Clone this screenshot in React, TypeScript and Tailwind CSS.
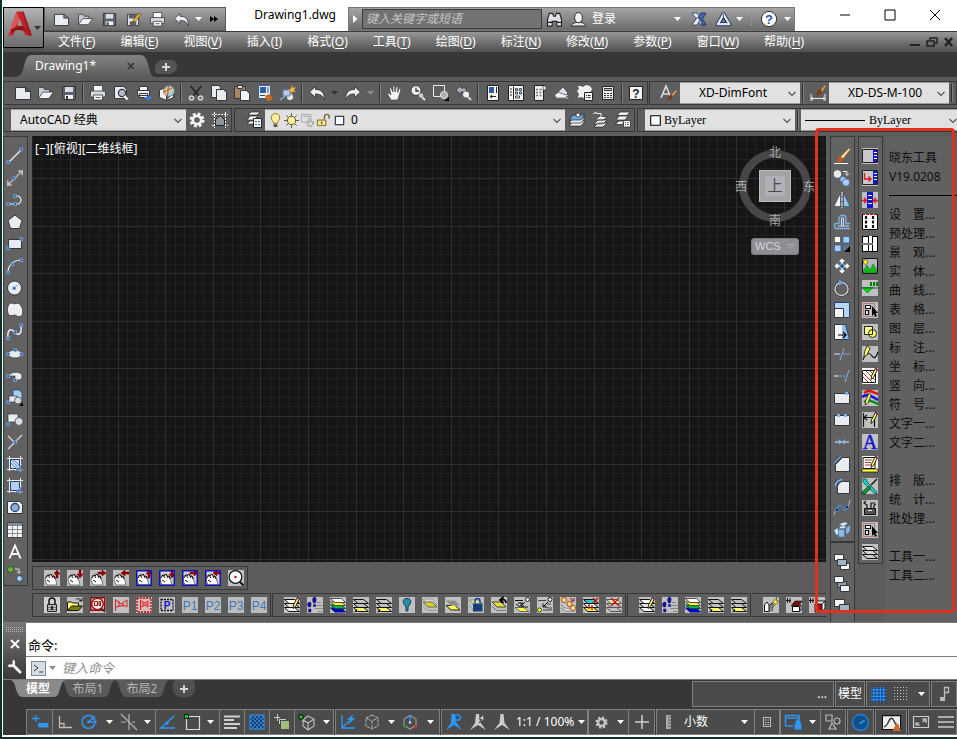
import type { ReactNode } from 'react';

const sans = "font-['Noto_Sans','Noto_Sans_CJK_SC',sans-serif]";

/* ---------- shared icon parts ---------- */

const Node = ({ x, y }: { x: number; y: number }) => (
  <rect x={x - 1} y={y - 1} width="2.4" height="2.4" fill="#253a5c" stroke="#76aaf0" strokeWidth="1" />
);

const Tile = ({ fill = '#c0c0c0' }: { fill?: string }) => <rect width="16" height="16" fill={fill} />;

const Sheets = ({ a = '#c0c0c0', b = '#c0c0c0', c = '#c0c0c0', stroke = '#111' }) => (
  <g stroke={stroke} strokeWidth="1" strokeLinejoin="round">
    <path d="M.5 10.500h10l5 4H5z" fill={c} />
    <path d="M.5 6.500h10l5 4H5z" fill={b} />
    <path d="M.5 2.500h10l5 4H5z" fill={a} />
  </g>
);

const Pencil = () => (
  <g>
    <path d="M13.500 0l2 1.500-4 8-2.500 2 .5-3.500z" fill="#ffff66" stroke="#111" strokeWidth=".9" />
    <path d="M13 1l2-1 1 2-1 1z" fill="#8b1a6b" />
  </g>
);

const Hand = () => (
  <g>
    <path d="M3 15l-2-5 1-4 3-2 3 1 3 2 1 4 1 4z" fill="#fff" stroke="#555" strokeWidth=".8" />
    <path d="M2 8l2-3 2 3M5 6l2-2 2 4M8 7l2-1 1 3M3 10l3 2" fill="none" stroke="#111" strokeWidth="1" />
  </g>
);

const arrows = {
  up: 'M12 8V4h-2l3-4 3 4h-2v4z',
  down: 'M12 0v4h-2l3 4 3-4h-2V0z',
  right: 'M8 2h4V0l4 3-4 3V4H8z',
  left: 'M16 2h-4V0L8 3l4 3V4h4z',
};

const pan = (dir: keyof typeof arrows, framed: boolean) => (
  <>
    <Tile fill={framed ? '#d4d0d8' : '#c0c0c0'} />
    <Hand />
    <path d={arrows[dir]} fill="#8b0000" stroke="#8b0000" strokeWidth=".6" />
    {framed && <rect x=".75" y=".75" width="14.5" height="14.5" fill="none" stroke="#1010b0" strokeWidth="1.5" />}
  </>
);

const pTile = (label: string) => (
  <>
    <Tile fill="#bcbcbc" />
    <text x="8" y="12.500" textAnchor="middle" fontSize="12" fontFamily="Liberation Sans, sans-serif" fill="#3f78bd">
      {label}
    </text>
  </>
);

const silver = '#e8ebf0';
const dark = '#33363b';
const sky = '#7fb2ee';

const iconMap: Record<string, ReactNode> = {
  /* file */
  new: <path d="M.5 2.500h10l5 4v8H.5z M10.500 2.500v4h5" fill={silver} stroke={dark} />,
  open: (
    <g stroke={dark} strokeWidth=".8">
      <path d="M.5 13.500V2.500h5l1 2h5v3" fill="#c6ccd6" />
      <path d="M.5 13.500L5 7h10.500l-4.500 6.500z" fill="#f0f2f5" />
    </g>
  ),
  save: (
    <g>
      <path d="M1.500 1.500h13v13h-13z" fill="#5b626e" stroke={dark} />
      <path d="M4 2h8v5H4z" fill="#d9dde5" />
      <path d="M4 10h8v4H4z" fill="#f1f3f6" />
      <path d="M5 11h2v3H5z" fill={dark} />
    </g>
  ),
  saveAs: (
    <g>
      <path d="M1.500 2.500h12v12h-12z" fill="#e4e7ec" stroke={dark} />
      <path d="M3 3h8v4H3z" fill="#5b626e" />
      <path d="M4 10h7v4H4z" fill="#5b626e" />
      <path d="M14 1l2 2-6 7-3 1 1-3z" fill="#f0b440" stroke="#5a3510" strokeWidth=".7" />
    </g>
  ),
  print: (
    <g stroke={dark} strokeWidth=".8">
      <path d="M3.500 .5h9v6h-9z" fill="#fff" />
      <path d="M.5 6h15v6H.5z" fill="#d6dae1" />
      <path d="M3.500 10h9v5h-9z" fill="#fff" />
      <path d="M5.500 12.500h5" />
    </g>
  ),
  preview: (
    <g>
      <path d="M1.500 1.500h9l3 3v9h-12z" fill={silver} stroke={dark} />
      <circle cx="9" cy="8" r="3.600" fill="#aebccc" stroke={dark} strokeWidth="1.200" />
      <path d="M11.500 11l3 3.500" stroke="#fff" strokeWidth="2.200" />
    </g>
  ),
  publish: (
    <g>
      <path d="M3.500 1.500h8v4h-8z M1.500 5.500h12v5h-12z M3.500 8.500h8v4h-8z" fill="#f0f2f5" stroke={dark} />
      <path d="M8 12h4v-2.500l4 3.500-4 3v-2H8z" fill="#3c78d8" />
    </g>
  ),
  globe: (
    <g>
      <path d="M.5 5l7-3v13.500l-7-3z M7.500 15.500l7-3V8" fill="#f3f4f6" stroke={dark} />
      <circle cx="10" cy="6" r="5.400" fill="#9fd4dc" stroke="#777" />
      <path d="M6 4c3-3 5 0 3 3s-3 1-3 3M12 3c2 1 2 4 0 5z" fill="#f0c860" />
      <path d="M9.500 1l-1 10M5 7l8-4" stroke="#d24a30" />
    </g>
  ),
  /* edit */
  cut: (
    <g fill="none" stroke="#22252a" strokeWidth="1.600">
      <path d="M2.500 1l8.500 10M13.500 1L5 11" />
      <circle cx="3.500" cy="13" r="2" stroke="#d3d6db" />
      <circle cx="12.500" cy="13" r="2" stroke="#d3d6db" />
    </g>
  ),
  copy: (
    <g fill={silver} stroke={dark}>
      <path d="M.5 .5h7l2 2v10h-9z" />
      <path d="M5.500 4.500h7l3 3v8h-10z" />
    </g>
  ),
  paste: (
    <g stroke={dark}>
      <path d="M.5 1.500h11v12H.5z" fill="#a9865d" />
      <path d="M3.500 .5h5v3h-5z" fill="#ddd" />
      <path d="M6.500 5.500h6l3 3v7h-9z" fill="#f1f3f6" />
    </g>
  ),
  match: (
    <g>
      <path d="M1.500 .5h12v13h-12z" fill="#eef1f5" stroke="#335e9e" />
      <path d="M3 2h6v6H3z" fill="#2d5fa8" />
      <path d="M11 2v6M3 10.500h5" stroke="#444" />
      <path d="M8 11l4-2 4 4-3 3h-3z" fill="#c96a1c" />
    </g>
  ),
  blockEdit: (
    <g>
      <circle cx="10" cy="12" r="3" fill={silver} />
      <path d="M3 5h7v6H3z" fill="#bfcbdc" stroke="#5781ba" />
      <path d="M0 15l5-4" stroke={sky} strokeWidth="1.500" />
      <path d="M12 0l1 3 3-1-2 3 2 2-3-.500L11 9l-.500-3L8 5l3-1.500z" fill="#f4b63c" />
    </g>
  ),
  undo: <path d="M.5 7l6-5.500v3c6 0 9 3 9 10.500-2-5-5-6-9-6v3.500z" fill="#eef0f3" stroke={dark} strokeWidth=".9" />,
  redo: <path d="M15.500 7L9.500 1.500v3C3.500 4.500.5 7.500.5 15c2-5 5-6 9-6v3.500z" fill="#eef0f3" stroke={dark} strokeWidth=".9" />,
  /* view */
  hand: (
    <path
      d="M4 15L.5 9 2 8l2 2-1.500-7 1.500-.5L6 7V.5h1.500L8 7 9.500 1l1.500.5-.5 6 2-4.500L14 4l-2 7-1.500 4z"
      fill="#f3f4f6"
      stroke={dark}
      strokeWidth=".6"
    />
  ),
  zoomRt: (
    <g>
      <circle cx="6" cy="5.500" r="5" fill="#edf0f4" stroke={dark} />
      <path d="M6 2.500V6h3" fill="none" stroke="#333" strokeWidth="1.300" />
      <circle cx="11" cy="10.500" r="2.200" fill="#c8ced8" />
      <path d="M12 12l3 3" stroke="#ddd" strokeWidth="2" />
    </g>
  ),
  zoomWin: (
    <g>
      <path d="M.5 .5h11v11H.5z" fill="none" stroke="#e8ebf0" />
      <circle cx="11" cy="10" r="3.600" fill="#aab1bc" stroke="#ddd" />
      <path d="M16 12v4h-5z" fill="#000" />
    </g>
  ),
  zoomPrev: (
    <g>
      <path d="M0 5l5-4.500v2.500h5v4H5v2.500z" fill="#a9b0ba" stroke={dark} strokeWidth=".8" />
      <circle cx="10" cy="9.500" r="3" fill="#eef0f3" />
      <path d="M12 12l3 3" stroke="#ddd" strokeWidth="2" />
    </g>
  ),
  props: (
    <g>
      <path d="M2.500 .5h11v15h-11z" fill="#f3f4f6" stroke="#222" />
      <path d="M4 2h5v6H4z" fill="#2c5da5" />
      <path d="M11.500 2v6M5 11.500h6M7 10l-2 1.500L7 13" stroke="#222" />
    </g>
  ),
  designCenter: (
    <g>
      <path d="M.5 .5h15v15H.5z" fill="#f3f4f6" stroke="#222" />
      <path d="M5.500 1.500v13M2 4h2M2 7h2M2 10h2" stroke="#222" />
      <path d="M7.500 3.500h2v2h-2zM11.500 3.500h2v2h-2zM7.500 7h2v2h-2zM11.500 7h2v2h-2zM7.500 11h4v2h-4z" fill="#fff" stroke="#345" />
    </g>
  ),
  palettes: (
    <g>
      <path d="M3.500 .5h9v15h-9z" fill="#eceef1" stroke="#222" />
      <path d="M12 1h3v4h-3z" fill="#eceef1" stroke="#222" strokeWidth=".6" />
      <path d="M5 4.500h2M8.500 4.500h2M5 7.500h2M8.500 7.500h2M5 10.500h2M8.500 10.500h2" stroke="#777" strokeWidth="1.500" />
    </g>
  ),
  sheetSet: (
    <g stroke={dark} strokeWidth=".7">
      <path d="M.5 12h14l1 2H2z" fill="#cfd4db" />
      <path d="M.5 10l5-4 9 4-3 3H2z" fill="#eef0f3" />
      <path d="M4 7l5-5 5 6-2 2z" fill="#dfe3e9" />
    </g>
  ),
  markup: (
    <g>
      <path d="M1 1l3 0 2 1 3-2 4 1 2 3-2 4H7v5l-3-1-3 1 1-4-2-3 2-2z" fill="#eef0f3" />
      <path d="M7.500 7.500h8v8h-8z" fill="#f3f4f6" stroke="#222" />
      <path d="M9 10.500h1M11 10.500h2.500M9 12.500h1M11 12.500h2.500" stroke="#222" />
    </g>
  ),
  calc: (
    <g>
      <path d="M2.500 1.500h11v13h-11z" fill="#eef0f3" stroke="#222" />
      <path d="M4.500 3.500h7v2h-7z" fill="#ccc" stroke="#333" />
      <path d="M4 8.500h8M4 10.500h8M4 12.500h8" stroke="#333" strokeDasharray="2 1" />
    </g>
  ),
  helpBox: (
    <g>
      <path d="M1.500 1.500h13v13h-13z" fill="#f3f4f6" stroke="#222" />
      <text x="8" y="12.500" textAnchor="middle" fontSize="12" fontWeight="700" fontFamily="Liberation Sans, sans-serif" fill="#222">?</text>
    </g>
  ),
  textStyle: (
    <g>
      <path d="M0 13L5 1l5 12M2 9h6" fill="none" stroke="#ddd" strokeWidth="1.600" />
      <path d="M15 5l1 1-5 6-2-1z" fill="#e0984a" />
      <path d="M10 9l2 2c0 3-3 5-6 4 2-1 1-4 4-6z" fill="#7a3e18" />
    </g>
  ),
  dimStyle: (
    <g>
      <path d="M1 9v7M15 9v7M1 13.500h14M3 12l-2 1.500L3 15M13 12l2 1.500L13 15" fill="none" stroke="#e8ebf0" />
      <path d="M15 0l1 1-4 6-2-1z" fill="#e0984a" />
      <path d="M10 4l2 2c0 3-3 5-7 4 2-1 2-5 5-6z" fill="#7a3e18" />
    </g>
  ),
  gear: (
    <g>
      <circle cx="8" cy="8" r="6" fill="none" stroke="#f0f2f5" strokeWidth="3" strokeDasharray="2.700 2" />
      <circle cx="8" cy="8" r="4.200" fill="none" stroke="#f0f2f5" strokeWidth="2.800" />
    </g>
  ),
  wsHouse: (
    <g fill="none">
      <path d="M0 2.500h16M0 13.500h16M2.500 0v16M13.500 0v16" stroke="#f4f4f4" strokeDasharray="2 1" />
      <path d="M3.500 13.500V7.500l4.500-4 4.500 4v6z" fill="#8f959d" stroke="#222" />
    </g>
  ),
  layerProps: (
    <g>
      <path d="M5 0h9l-3 3H2zM4 4h8l-4 4H1zM4 9h4v3H1z" fill="#f3f4f6" stroke="#222" strokeWidth=".7" />
      <path d="M7.500 6.500h8v9h-8z" fill="#f3f4f6" stroke="#222" />
      <path d="M9 9.500h2M12 9.500h2M9 12.500h2M12 12.500h2" stroke="#3a6db5" />
    </g>
  ),
  bulb: (
    <g>
      <path d="M8 .5A4.500 4.500 0 0112.500 5C12.500 8 10 8.500 10 11H6c0-2.500-2.500-3-2.500-6A4.500 4.500 0 018 .5z" fill="#fff0a0" stroke="#8d7419" />
      <path d="M6 12h4v3H6z" fill="#555" />
    </g>
  ),
  sun: (
    <g stroke="#5c5025">
      <path d="M8 0v16M0 8h16M2.500 2.500l11 11M13.500 2.500l-11 11" />
      <circle cx="8" cy="8" r="4.300" fill="#fff0a0" />
    </g>
  ),
  vpFreeze: (
    <g fill="none" stroke="#a5a5a5">
      <path d="M1.500 1.500h10v8h-10zM3.500 3.500h6v4" />
      <circle cx="11" cy="11" r="3" strokeWidth="2.400" strokeDasharray="1.700 1" />
    </g>
  ),
  unlock: (
    <g>
      <path d="M9 7V4a2.500 2.500 0 015 0v2" fill="none" stroke="#77672a" strokeWidth="1.500" />
      <path d="M1.500 7.500h9v6h-9z" fill="#f7e68c" stroke="#77672a" />
      <path d="M6 9v3" stroke="#333" />
    </g>
  ),
  swatch: <path d="M3.500 3.500h9v9h-9z" fill="#fff" stroke="#000" />,
  layerCur: (
    <g stroke="#222" strokeWidth=".7">
      <path d="M4 9h12l-4 5H0z" fill="#eef0f3" />
      <path d="M4 6h12l-4 5H0z" fill="#eef0f3" />
      <path d="M4 3h12l-4 5H0z" fill="#6fa4e0" />
      <circle cx="9" cy="3" r="2" fill="#fff" />
    </g>
  ),
  layerPrev: (
    <g stroke="#222" strokeWidth=".7">
      <path d="M6 11h9l-4 4H2zM6 8h9l-4 4H2zM7 4.500h8L11.500 8H3.500z" fill="#eef0f3" />
      <path d="M1 2l3-2v1.500h5V5" fill="none" stroke="#eef0f3" strokeWidth="1" />
    </g>
  ),
  layerState: (
    <g stroke="#222" strokeWidth=".7">
      <path d="M5 0h10l-3 3.500H2zM4 4h9l-3 4H1zM4 9h6l-3 3.500H0z" fill="#eef0f3" />
      <path d="M8.500 8.500h7v6.500h-7z" fill="#f3f4f6" />
      <path d="M10 10.500h1M12 10.500h2M10 12.500h1M12 12.500h2" stroke="#335" />
    </g>
  ),
  /* draw */
  line: (<><path d="M2 14L14 2" stroke="#eef0f3" strokeWidth="1.200" /><Node x={1} y={14} /><Node x={14} y={1} /></>),
  xline: (
    <>
      <path d="M3 13L13 3" stroke="#bcbcbc" strokeWidth="1.200" />
      <path d="M0 16v-6l5.500 5.500zM16 0v6L10.500.500z" fill="#bcbcbc" />
      <Node x={7} y={8} />
    </>
  ),
  pline: (<><path d="M2 12h8a4 4 0 000-8H8" fill="none" stroke="#eef0f3" strokeWidth="1.200" /><Node x={1} y={12} /><Node x={8} y={12} /><Node x={8} y={4} /></>),
  polygon: <path d="M8 1l7 5.500-2.500 8h-9L1 6.500z" fill={silver} stroke={dark} />,
  rect: (<><path d="M1.500 3.500h13v9h-13z" fill={silver} stroke={dark} /><Node x={1} y={12} /><Node x={14} y={3} /></>),
  arc: (<><path d="M1 14C1 7 7 2 14 2" fill="none" stroke="#eef0f3" strokeWidth="1.200" /><Node x={1} y={14} /><Node x={5} y={6} /><Node x={14} y={2} /></>),
  circle: (<><circle cx="7.500" cy="8" r="7" fill={silver} stroke={dark} /><path d="M8 8l4-4" stroke={sky} /><Node x={7} y={8} /></>),
  cloud: <path d="M2 2c2-1.500 4-1 5 0 3-1.500 6-1 7 2 2 2 2 8 1 9-2 3-5 1-7 0-3 1-7 1-7-2-1-2-1-5 1-9z" fill="#eceef2" stroke={dark} strokeWidth=".8" />,
  spline: (<><path d="M1 14C0 5 4 4 7.500 8S15 11 14 2" fill="none" stroke="#eef0f3" strokeWidth="1.500" /><Node x={1} y={14} /><Node x={8} y={8} /><Node x={14} y={1} /></>),
  ellipse: (<><ellipse cx="8" cy="8" rx="7" ry="4" fill={silver} stroke={dark} strokeWidth=".7" /><Node x={1} y={8} /><Node x={14} y={8} /><Node x={8} y={4} /></>),
  ellipseArc: (<><path d="M2 8c1-5 13-5 13 0s-4 4-7 4V8z" fill={silver} stroke={dark} strokeWidth=".7" /><Node x={1} y={8} /><Node x={8} y={12} /></>),
  insert: (
    <>
      <path d="M6 0h6l3 3v7H6z" fill="#a9cdf5" stroke="#2c4a75" strokeWidth=".8" />
      <path d="M2 6h8v6H2z" fill={silver} stroke={dark} strokeWidth=".7" />
      <circle cx="11" cy="10.500" r="3.500" fill="#d8dce3" stroke={dark} strokeWidth=".7" />
      <path d="M16 12v4h-4z" fill="#000" />
      <Node x={1} y={12} />
    </>
  ),
  block: (
    <>
      <path d="M1 2h10v8H1z" fill={silver} stroke={dark} strokeWidth=".7" />
      <circle cx="12" cy="9.500" r="4" fill="#d8dce3" stroke={dark} strokeWidth=".7" />
      <Node x={1} y={12} />
    </>
  ),
  point: (<><path d="M1 15L15 1M1 2l6 6" stroke="#d7dade" strokeWidth="1.200" /><Node x={8} y={8} /></>),
  hatch: (
    <>
      <path d="M2.500 0v15M13.500 0v9M0 2.500h16M0 13.500h10" stroke="#eef0f3" />
      <path d="M3.500 3.500h9v9h-9z" fill="#cfdcf0" stroke="#24456f" />
      <path d="M4 7l5 5M4 4l8 8M7 4l5 5" stroke="#5b8bcb" />
      <path d="M8 15L15 8M10 14h6M13 10v6" stroke={sky} />
    </>
  ),
  gradient: (
    <>
      <path d="M2.500 0v15M13.500 0v9M0 2.500h16M0 13.500h10" stroke="#eef0f3" />
      <path d="M3.500 3.500h9v9h-9z" fill="#b4cdf0" stroke="#24456f" />
      <path d="M8 15L15 8M10 14h6M13 10v6" stroke={sky} />
    </>
  ),
  region: (<><path d="M.5 1.500h12l3 3v9H.5z" fill="#eef0f3" stroke={dark} /><circle cx="8" cy="7.500" r="4" fill="#8fafda" stroke="#27446d" strokeWidth="1.300" /></>),
  table: (
    <>
      <path d="M.5 .5h15v15H.5z" fill="#f3f4f6" stroke="#444" />
      <path d="M1 1h14v3H1z" fill="#7e8b9b" />
      <path d="M1 7.500h14M1 11.500h14M5.500 4v11M10.500 4v11" stroke="#8a8f96" />
    </>
  ),
  mtext: <path d="M2.500 14.500L8 1.500l5.500 13M4.500 10h7" fill="none" stroke="#fff" strokeWidth="1.800" />,
  addSel: (
    <>
      <circle cx="3.500" cy="3.500" r="3" fill="#6db33f" stroke="#2e5a17" />
      <path d="M8 3h4v4M10 5.500l2 2 2-2" fill="none" stroke="#ddd" />
      <circle cx="12.500" cy="12.500" r="3" fill="#a9cdf5" stroke="#24456f" />
    </>
  ),
  /* modify */
  erase: (
    <>
      <path d="M15 0l1.500 1.500L9 11 6.500 8.500z" fill="#f4d79e" stroke="#7b4c16" strokeWidth=".6" />
      <path d="M5.500 8l3.500 3c0 3-3 4-6 3 2-1 0-4 2.500-6z" fill="#c65a16" />
      <path d="M0 15.500h14" stroke="#fff" />
    </>
  ),
  copyObj: (
    <>
      <circle cx="3.500" cy="4" r="3.700" fill={silver} />
      <circle cx="9" cy="9.500" r="3" fill="#a9cdf5" stroke="#2c5a97" strokeWidth=".7" />
      <circle cx="12" cy="12.500" r="3.700" fill="#a9cdf5" stroke="#2c5a97" strokeWidth=".7" />
      <path d="M9 1.500h4v3M11 3.500l2 2 2-2" fill="none" stroke="#eee" />
    </>
  ),
  mirror: (
    <>
      <path d="M6.500 1v13.500H0z" fill="#f3f4f6" stroke={dark} strokeWidth=".6" />
      <path d="M9.500 1v13.500H16z" fill="#9cc2ec" stroke="#24456f" strokeWidth=".6" />
      <path d="M8 0v16" stroke="#eef0f3" strokeDasharray="4 1" />
    </>
  ),
  offset: (
    <>
      <path d="M16 14.500H2c-2 0-2-5 0-5h3V5c0-5 7-5 7 0v4.500h4" fill="none" stroke={sky} strokeWidth="1.300" />
      <path d="M15 12H3.500h4V5c0-2 2-2 2 0v7H15" fill="none" stroke="#c5d8ef" strokeWidth="1.200" />
    </>
  ),
  array: (
    <>
      <path d="M.5 .5h6v6h-6z" fill="#fff" stroke={dark} strokeWidth=".6" />
      <path d="M9 .5h6.500v6.500H9zM.5 9H7v6.500H.5z" fill="#a5caf5" stroke="#315f9c" strokeWidth=".8" />
      <path d="M9 9h6v6H9z" fill="#54718f" />
      <path d="M16 10v6h-6z" fill="#000" />
    </>
  ),
  move: (
    <>
      <path d="M8 0l4 4H9.500v2h-3V4H4zM8 16l4-4H9.500v-2h-3v2H4zM0 8l4 4V9.500h2v-3H4V4zM16 8l-4 4V9.500h-2v-3h2V4z" fill="#f0f2f5" stroke={dark} strokeWidth=".5" />
      <path d="M6 6h4v4H6z" fill="#24456f" stroke={sky} />
    </>
  ),
  rotate: (<><circle cx="7.500" cy="9" r="6.500" fill="none" stroke={dark} strokeWidth="2.500" /><circle cx="7.500" cy="9" r="6.500" fill="none" stroke="#cfd2d7" strokeWidth="1.400" /><path d="M5 0l5 2.500-5 3z" fill="#6fa4e6" /></>),
  scale: (<><path d="M.5 .5h15v15H.5z" fill="#b9d5f5" stroke="#24456f" /><path d="M.5 6.500h9v9h-9z" fill="#f3f4f6" stroke={dark} /></>),
  stretch: (
    <>
      <path d="M8 .5h3.500l4 15H8z" fill="#8fbbee" stroke="#24456f" />
      <path d="M.5 .5h8v15h-8z" fill="#f3f4f6" stroke="none" />
      <path d="M8.500 .5h-8v15h8" stroke={dark} />
      <path d="M4 11h8M9 8l3 3-3 3" fill="none" stroke="#000" strokeWidth="1.200" />
    </>
  ),
  trim: (<><path d="M0 8h6" stroke="#dfe6ef" /><path d="M9 8h7" stroke={sky} strokeDasharray="3 1" /><path d="M10 2L6 14" stroke={sky} /></>),
  extend: (<><path d="M0 8h5" stroke="#eef0f3" /><path d="M6 8h5" stroke={sky} strokeDasharray="2 1" /><path d="M15 2l-4 12" stroke={sky} /></>),
  breakPt: (<><path d="M.5 3.500h15v10H.5z" fill={silver} stroke={dark} /><path d="M11 2h3v3h-3z" fill={sky} /></>),
  breakObj: (<><path d="M.5 3.500h15v10H.5z" fill={silver} stroke={dark} /><path d="M3 2h3v3H3zM10 2h3v3h-3z" fill={sky} /></>),
  join: (<><path d="M1 8h14" stroke="#eef0f3" /><path d="M5 5l3 3-3 3zM11 5L8 8l3 3z" fill={sky} /></>),
  chamfer: (<><path d="M1.500 15.500v-7l7-7h7v14z" fill={silver} stroke={dark} /><path d="M0 7l6.500-6.500" stroke={dark} strokeWidth="2.500" /><path d="M0 7l6.500-6.500" stroke={sky} strokeWidth="1.300" /></>),
  fillet: (<><path d="M3.500 15.500v-6c0-4 3-6 6-6h6v12z" fill={silver} stroke={dark} /><path d="M1 8c1-4 3-6 7-6.500" fill="none" stroke={dark} strokeWidth="3" /><path d="M1 8c1-4 3-6 7-6.500" fill="none" stroke={sky} strokeWidth="1.800" /></>),
  blend: (
    <>
      <path d="M0 15l2-6M14 7l2-7" stroke="#bbb" />
      <path d="M3 10c1-8 5-4 6-1s4 1 4-3" fill="none" stroke="#4d86c9" strokeWidth="1.400" />
      <circle cx="3" cy="10" r="1.700" fill="#1c2f4c" stroke="#4d86c9" />
      <circle cx="13" cy="7" r="1.700" fill="#1c2f4c" stroke="#4d86c9" />
    </>
  ),
  explode: (
    <>
      <path d="M5 2l6-2 3 1.500-5 3z" fill="#e6effa" stroke="#456a99" strokeWidth=".5" />
      <path d="M0 8l4-2 1 6-3 1z" fill="#d7e5f7" stroke="#456a99" strokeWidth=".5" />
      <path d="M4.500 6.500h6l2-2.500h-6z" fill="#d7e5f7" stroke="#456a99" strokeWidth=".5" />
      <path d="M4.500 7.500h6V15h-6zM12 6l4-3v6l-4 4z" fill="#8fb9ea" stroke="#456a99" strokeWidth=".5" />
    </>
  ),
  order1: (<><path d="M.5 .5h9v6h-9zM6.500 9.500h9v6h-9z" fill="#f3f4f6" stroke={dark} /><path d="M3.500 5.500h9v6h-9z" fill="#a3b3c6" stroke={dark} /></>),
  order2: (<><path d="M3.500 5.500h9v6h-9z" fill="#8c9bad" stroke={dark} /><path d="M.5 .5h9v6h-9zM6.500 9.500h9v6h-9z" fill="#f3f4f6" stroke={dark} /></>),
  order3: (<><path d="M.5 1.500h10v7H.500z" fill="#f3f4f6" stroke={dark} /><path d="M5.500 6.500h10v7h-10z" fill="#a3b3c6" stroke={dark} /></>),
  /* XD tools */
  xdPanel: (<><Tile /><path d="M.5 1.500h15v13H.5z" fill="#c8c8c8" stroke="#222" /><path d="M11 2h4v12h-4z" fill="#1515d0" /><path d="M12 4.500h3M12 7.500h3M12 10.500h3" stroke="#fff" /></>),
  xdPanelIn: (
    <>
      <Tile /><path d="M.5 .5h15v14H.5z" fill="#c8c8c8" stroke="#222" /><path d="M11 1h4v13h-4z" fill="#1515d0" /><path d="M12 3.500h3M12 6.500h3M12 9.500h3" stroke="#fff" />
      <path d="M2.500 3v6H9M6.500 6.500L9 9l-2.500 2.500" fill="none" stroke="#e01010" strokeWidth="1.300" />
    </>
  ),
  xdSqueeze: (
    <>
      <Tile /><path d="M5 0h6v16H5z" fill="#1515d0" /><path d="M6 3.500h4M6 7.500h4M6 11.500h4" stroke="#fff" />
      <path d="M0 8.500h4M2 6l2.500 2.500L2 11M16 8.500h-4M14 6l-2.500 2.500L14 11" fill="none" stroke="#e01010" strokeWidth="1.400" />
    </>
  ),
  xdGrid: (
    <>
      <Tile fill="#fff" />
      <path d="M.5 0v15.500h15V0" stroke="#000" />
      <path d="M0 .5h16" stroke="#a00" strokeDasharray="3 1" />
      <path d="M3.500 2.500h1v2h-1zM10.500 2.500h1v2h-1zM3.500 7h1v2h-1zM10.500 7h1v2h-1zM3.500 11.500h1v2h-1zM10.500 11.500h1v2h-1z" stroke="#111" strokeWidth="1.200" />
    </>
  ),
  xdWindow: (<><Tile fill="#fff" /><path d="M.5 0v16M6.500 0v16M10.500 0v16M15.500 0v16M0 .5h6M10 .5h6M0 15.500h16" stroke="#000" /><path d="M0 8h11" stroke="#777" strokeWidth="2" /></>),
  xdScene: (<><Tile fill="#b8b8c0" /><path d="M1 15v-2l4-6 3 5 3-6 4 6v3z" fill="#16b916" stroke="#063" strokeWidth=".5" /><circle cx="3.500" cy="4" r="2.300" fill="#ff0" stroke="#333" strokeWidth=".6" /><path d="M.5.5h15v15H.5z" fill="none" stroke="#111" /></>),
  xdFilter: (<><Tile /><path d="M0 7.500h11L5.500 13z" fill="#0d0" stroke="#063" strokeWidth=".6" /><path d="M8 2h2v4H8zM11 2h2v4h-2zM14 2h2v4h-2z" fill="#0a7a0a" /><path d="M0 8h16" stroke="#063" /></>),
  xdSelect: (
    <>
      <Tile /><path d="M1.500 1.500h11v13h-11z" fill="none" stroke="#b03030" strokeDasharray="1 1" />
      <path d="M3.500 3.500h5v3h-5zM3.500 8.500h3v4h-3z" fill="#fff" stroke="#111" strokeWidth="1.200" />
      <path d="M10 4v10l2-2 1.500 3 1.500-1-1.500-3H16z" fill="#000" />
    </>
  ),
  xdShapes: (<><Tile /><path d="M2.500 2.500h8v8h-8z" fill="#ffff99" stroke="#222" /><circle cx="10.500" cy="9.500" r="4" fill="#ffff66" stroke="#222" /><path d="M10.500 5.500v5h-4" fill="none" stroke="#222" /></>),
  xdCurve: (<><Tile /><path d="M1 14c1-4 2-5 4-6s3-1 5 2 4 2 6-4" fill="none" stroke="#111" strokeWidth="1.200" /><path d="M5 0l3 2-3 7-3 2 .5-5z" fill="#ffff66" stroke="#111" strokeWidth=".8" /></>),
  xdHatch: (<><Tile fill="#fff" /><path d="M.5 2.500h13v12H.5z" fill="none" stroke="#111" /><path d="M1 5l9 9M1 9l5 5M4 3l9 9M8 3l5 5" stroke="#a02020" strokeWidth=".9" /><Pencil /></>),
  xdRainbow: (<><Tile /><path d="M2 3c5-4 8-1 14 1" stroke="#e01010" strokeWidth="2.500" fill="none" /><path d="M0 7c6-4 9-1 16 3" stroke="#1515e0" strokeWidth="2.500" fill="none" /><path d="M2 12c5-3 8-1 14 2" stroke="#0a8f1e" strokeWidth="2.500" fill="none" /><path d="M7 3l2 2-3 8-3 2 1-5z" fill="#ffff66" stroke="#111" strokeWidth=".7" /></>),
  xdDim: (<><Tile /><path d="M1.500 1v14M12.500 8v7M2 5.500h10M5 3L2 5.500 5 8" fill="none" stroke="#111" strokeWidth="1.200" /><Pencil /></>),
  xdText: (<><Tile /><text x="8" y="15" textAnchor="middle" fontSize="20" fontFamily="Liberation Serif, serif" fill="#1515d0" stroke="#1515d0" strokeWidth=".5">A</text></>),
  xdNotes: (<><Tile fill="#fff" /><path d="M1 1.500h12v11H1z" fill="#fff" stroke="#111" /><path d="M3 4h7M3 6.500h6M3 9h6" stroke="#b03030" /><path d="M0 13h16v3H0z" fill="#ffff33" stroke="#111" strokeWidth=".7" /><Pencil /></>),
  xdTools: (<><Tile /><path d="M1 1l3 0 2 4 8 8 1 3-3-1-8-8-3-3z" fill="#18cfd4" stroke="#043" strokeWidth=".7" /><path d="M15 1L9 7" stroke="#111" strokeWidth="1.500" /><path d="M7 8l2 2-6 6H0v-2z" fill="#0a9a3a" stroke="#031" strokeWidth=".7" /></>),
  xdBox: (<><Tile /><path d="M5 8V5L2 3l2-2M9 8V3h4M12 8V5l2-1" fill="none" stroke="#111" strokeWidth="1.200" /><path d="M2.500 8.500h11v6h-11z" fill="#555" stroke="#111" /><path d="M6 10.500h4" stroke="#eee" /></>),
  xdLayers: (<><Tile /><Sheets a="#e4e4e4" b="#d4d4d4" c="#c8c8c8" /></>),
  lock: (<><Tile fill="#d0d0d0" /><path d="M5 7V4a3 3 0 016 0v3" fill="none" stroke="#111" strokeWidth="1.500" /><path d="M3.500 7.500h9v7h-9z" fill="#bbb" stroke="#222" /><path d="M4 10.500h8M4 12.500h8" stroke="#777" /><path d="M8 9v4" stroke="#000" strokeWidth="1.500" /></>),
  folder: (<><Tile /><path d="M.5 13.500V5h4l1 1h6v3" fill="#ffff80" stroke="#111" /><path d="M.5 13.500l4-4.500h11l-4 4.500z" fill="#808000" stroke="#111" /><path d="M9 3c1-2 4-2 5 1M15 1v3h-3" fill="none" stroke="#111" /></>),
  zoomRed: (<><Tile fill="#d8b8b8" /><path d="M.75.75h14v12.500h-14z" fill="none" stroke="#8b1010" strokeWidth="1.500" /><circle cx="7.500" cy="7" r="5.700" fill="#eee" stroke="#8b1010" strokeWidth="1.300" /><path d="M4.500 4.500h3v4h-3zM9 4.500h1.500v4H9z" fill="none" stroke="#a00" /><path d="M11 11l4 4" stroke="#222" strokeWidth="1.500" /></>),
  flag: (<><Tile /><path d="M2.500 2v12M3 3l5 4 6-4v7c-2-2-4-2-6-1l-5 1M6 4v5M10 6v4" fill="none" stroke="#e02020" strokeWidth="1" /></>),
  flagBox: (<><Tile fill="#d8b8b8" /><path d="M1 1h14v14H1z" fill="none" stroke="#a01010" strokeWidth="1.300" strokeDasharray="2 1" /><path d="M4.500 3v10M5 4l4 2 3-2v6L9 8l-4 2M7 5v4M10 6v3" fill="none" stroke="#e02020" /></>),
  pBox: (<><Tile /><path d="M2 2.500h12v11H2z" fill="none" stroke="#111" strokeWidth="1.300" strokeDasharray="2 1" /><text x="8" y="12" textAnchor="middle" fontSize="10" fontWeight="700" fontFamily="Liberation Sans, sans-serif" fill="#1515d0">P</text></>),
  p1: pTile('P1'),
  p2: pTile('P2'),
  p3: pTile('P3'),
  p4: pTile('P4'),
  panUp: pan('up', false),
  panDown: pan('down', false),
  panRight: pan('right', false),
  panLeft: pan('left', false),
  pageUp: pan('up', true),
  pageDown: pan('down', true),
  pageRight: pan('right', true),
  pageLeft: pan('left', true),
  zoomDot: (<><Tile /><circle cx="7.500" cy="7" r="6.300" fill="#fff" stroke="#111" strokeWidth="1.200" /><circle cx="7.500" cy="7" r="1.200" fill="#c00" /><path d="M12 12l3.500 3.500" stroke="#111" strokeWidth="2" /></>),
  layPencil: (<><Tile /><Sheets a="#fff" b="#e4e4e4" c="#fff" /><Pencil /></>),
  feet: (
    <>
      <Tile />
      <path d="M10 5.500h4M9 8.500h7M8 11.500h8M11 14.500h4" stroke="#888" />
      <path d="M1.500 5.500c2-1 3 0 2.500 2.500l-.5 2h-2C0 8 .500 6 1.500 5.500zM1.500 12h2.500v3H1.500zM6.500 .5c2-.5 3 0 2.500 3L8.500 6h-2C5 3 5.500 1 6.500.500zM6.500 7.500h2v2h-2z" fill="#101090" stroke="#101090" strokeWidth=".5" />
    </>
  ),
  layColors: (
    <>
      <Tile />
      <path d="M.5 11h11l4 4H5z" fill="#0000c0" stroke="#0000a0" />
      <path d="M.5 8h11l4 3.500H5z" fill="#0fb04a" stroke="#053" />
      <path d="M.5 5h11l4 3.500H5z" fill="#ffef3a" stroke="#333" strokeWidth=".7" />
      <path d="M.5 1.500h11l4 4H5z" fill="#fff" stroke="#111" strokeWidth=".7" />
    </>
  ),
  layYellow: (<><Tile /><Sheets c="#ffff70" /><path d="M1 15l3-3v3z" fill="#111" /></>),
  blueBulb: (<><Tile /><path d="M8 1.500c4 0 4.500 3 3 5.500L9 10v4H7v-4L5 7C3.500 4.500 4 1.500 8 1.500z" fill="#2a8fa8" stroke="#123a68" /></>),
  flatYellow: (<><Tile /><path d="M1 2h9l5 7H6z" fill="#d8d8d8" stroke="#999" /><path d="M1 5h9l5 5H6z" fill="#d8d020" stroke="#666" /><path d="M1 10l5 3.500h9" stroke="#999" /></>),
  flatGray: (<><Tile /><path d="M1 8.500h9l5 4.500H6z" fill="#ffff50" stroke="#222" /><path d="M1 3.500h9l5 5H6z" fill="#8a8a8a" stroke="#aaa" /></>),
  layLock: (<><Tile /><path d="M1 3h9l5 4H6zM1 9l5 4h9" fill="#e8e8a0" stroke="#888" /><path d="M7 6V4a2.500 2.500 0 015 0v2" fill="none" stroke="#123a8c" strokeWidth="1.400" /><path d="M5 6.500h9.500v8H5z" fill="#123f7c" /></>),
  layBack: (<><Tile /><path d="M1 5h9l5 5H6z" fill="#e8e030" stroke="#444" /><path d="M1 9.500l5 4h9" fill="none" stroke="#777" /><path d="M15 6c0-3-2-4-5-3M12.500 0L9 3l3.500 3" fill="none" stroke="#000" strokeWidth="1.800" /></>),
  layPick: (<><Tile /><path d="M1 3.500h8M2 7l4 3h8M4 6h5" fill="none" stroke="#111" /><path d="M1 10.500h9l5 4H6z" fill="#ffff50" stroke="#333" strokeWidth=".7" /><circle cx="13.500" cy="2.500" r="2" fill="#fff" stroke="#111" /><path d="M11 5L7 9M7 6v3h3" stroke="#111" /></>),
  layPick2: (<><Tile /><path d="M1 3.500h8M7 8l4 3h4M10 7h4M6 13h9" fill="none" stroke="#444" /><circle cx="13" cy="2.500" r="2" fill="#fff" stroke="#111" /><circle cx="2.500" cy="13" r="2" fill="#ff3" stroke="#111" strokeWidth=".7" /><path d="M11 5l-5 5M6 6.500V10h3.500" stroke="#111" /></>),
  layMerge: (<><Tile /><path d="M1 11l5 3h9M1 8l5 3h5" fill="#fff" stroke="#777" /><circle cx="4" cy="3" r="2.500" fill="#ffdf8a" stroke="#b04a10" /><circle cx="9.500" cy="7" r="2.500" fill="#ffdf8a" stroke="#b04a10" /><circle cx="13" cy="11" r="2.500" fill="#fff0b0" stroke="#b04a10" /><path d="M10 1l4 3M14 1v3h-3" stroke="#a01010" /></>),
  layDel: (<><Tile /><Sheets a="#20cfd4" b="#fff" c="#ffff50" /><path d="M10 1l5 5M15 1l-5 5M6 7v5M9 8v5" stroke="#c01010" strokeWidth="1.400" /></>),
  layX: (<><Tile /><Sheets a="#fff0a0" stroke="#555" /><path d="M5 1l8 8M13 1L5 9" stroke="#c01010" strokeWidth="1.300" /></>),
  bolt: (<><Tile /><path d="M1.500 14.500V8l2.500-3 2 3v6.500zM7 14.500V8l2-2v8.500" fill="#fff" stroke="#111" /><path d="M14 0L9 6h3l-3 5 7-7h-3z" fill="#ffff30" stroke="#333" strokeWidth=".6" /></>),
  house: (<><Tile /><path d="M1.500 1v5M4 1v5M0 3.500h5" stroke="#111" /><path d="M6.500 9.500h7v5h-7zM13.500 9.500L15 8v5l-1.500 1.500" fill="#fff" stroke="#111" /><path d="M5 9l4-5h7l-3 5z" fill="#7a1010" stroke="#111" strokeWidth=".6" /></>),
  cube: (<><Tile /><path d="M1.500 1v5M4 1v5M0 3.500h5" stroke="#111" /><path d="M6 7h7v8H6z" fill="#b01010" stroke="#111" /><path d="M6 7l3-3h7l-3 3zM13 7l3-3v7l-3 4z" fill="#fff" stroke="#111" /></>),
  /* title bar */
  binoc: (<path d="M.5 15V8l2-6.500h3.500l1 3h2l1-3h3.500l2 6.500v7h-5v-5h-5v5z M.5 11h5M10.500 11h5" fill="#dde0e5" stroke="#222" strokeWidth="1.200" />),
  user: (<><path d="M.5 15c0-3 3-3 5-4h5c2 1 5 1 5 4z" fill="#dfe5ee" stroke="#222" /><ellipse cx="8" cy="6" rx="4.200" ry="5.500" fill="#eef2f7" stroke="#222" /></>),
  exchange: (<><path d="M1 2h5l9 12h-5z" fill="#e7ebf2" stroke="#2d3a5c" strokeWidth=".8" /><path d="M1 14h5l3-5-2.500-3z" fill="#e7ebf2" stroke="#2d3a5c" strokeWidth=".8" /><path d="M15 2h-5L7.500 6 9.500 9 11 14h4l-3.500-6z" fill="#3d68b0" stroke="#1d2f5c" strokeWidth=".8" /></>),
  a360: (
    <>
      <path d="M8 2.500L14 13H2z" fill="none" stroke="#24345c" strokeWidth="4.500" strokeLinejoin="round" />
      <path d="M8 2.500L14 13H2z" fill="none" stroke="#dfe6f2" strokeWidth="2.500" strokeLinejoin="round" />
      <path d="M8 2v4l-3 6M8 6l4 6" stroke="#24345c" strokeWidth=".8" />
    </>
  ),
  help: (<><circle cx="8" cy="8" r="7.600" fill="#fff" stroke="#222" strokeWidth=".9" /><text x="8" y="12.500" textAnchor="middle" fontSize="13" fontWeight="700" fontFamily="Liberation Sans, sans-serif" fill="#2558a8">?</text></>),
  /* status bar */
  infer: (<><path d="M4 1v7M0 4.500h7.500" stroke="#2f96f3" strokeWidth="1.300" /><rect x="6" y="9" width="10.500" height="4.500" rx="1" fill="#2f96f3" /></>),
  ortho: <path d="M2.500 2v11.500H15M3 9.500h4v4" fill="none" stroke="#bcbcbc" strokeWidth="1.300" />,
  polar: (<><circle cx="7.500" cy="8" r="6.500" fill="none" stroke="#2f96f3" strokeWidth="1.500" /><path d="M7.500 8H16M7.500 8l6.500-6" stroke="#2f96f3" strokeWidth="1.500" /><circle cx="7.500" cy="8" r="1.500" fill="#2f96f3" /></>),
  iso: <path d="M0 0l16 16M8 0v16M0 8h5M11 8h3" stroke="#b4b4b4" strokeWidth="1.200" fill="none" />,
  otrack: (<><path d="M14 2L1 14h14" fill="none" stroke="#2f96f3" strokeWidth="1.600" /><circle cx="7" cy="9" r="1.700" fill="#2f96f3" /></>),
  osnap: (<><path d="M2.500 2.500h13v13h-13z" fill="none" stroke="#ddd" strokeWidth="1.200" /><path d="M.5 .5h4v4h-4z" fill="#16c516" stroke="#000" strokeWidth=".8" /></>),
  lwt: <path d="M0 2.500h16M0 6h10M0 10h16M0 14h13" stroke="#cfcfcf" strokeWidth="1.800" />,
  transp: (
    <>
      <rect x="1" y="1" width="14" height="14" fill="#123f70" stroke="#2f96f3" />
      <path d="M1 4l3-3M1 8l7-7M1 12L12 1M2 15L15 2M6 15l9-9M10 15l5-5M4 1l11 11M8 1l7 7M12 1l3 3M1 2l13 13M1 6l9 9M1 10l5 5" stroke="#3f97f0" strokeWidth=".7" />
    </>
  ),
  cycle: (<><path d="M0 3.500h6M3.500 0v7M5.500 10V5.500H12" stroke="#ccc" fill="none" /><path d="M7 7h8v8H7z" fill="#9cc07f" /></>),
  osnap3d: (<><path d="M9 2l6 3v7l-6 4-5-4V6zM4 6l5 3 6-4M9 9v7" fill="none" stroke="#bbb" strokeWidth="1.200" /><path d="M0 1h4v4H0z" fill="#16c516" stroke="#000" strokeWidth=".8" /></>),
  ducs: (<><path d="M2 1v13h13M2 14l7-7" fill="none" stroke="#2f96f3" strokeWidth="1.400" /><path d="M13 0L7 6h3l-2 5 7-7h-3z" fill="#2f96f3" /></>),
  filter3d: <path d="M8 1l6 3v8l-6 3-6-3V4zM2 4l6 3 6-3M8 7v8" fill="none" stroke="#a9a9a9" strokeWidth="1.100" strokeDasharray="3 1" />,
  gizmo: (<><path d="M8 1.500l6 3.500v6.500L8 15l-6-3.500V5z" fill="none" stroke="#999" strokeWidth="1.200" /><path d="M8 8V2" stroke="#2f96f3" strokeWidth="1.300" /><circle cx="8" cy="2" r="1.500" fill="#2f96f3" /><circle cx="2.500" cy="12" r="1.600" fill="#2b9e2b" /><circle cx="13.500" cy="12" r="1.600" fill="#cf3b22" /><circle cx="8" cy="8.500" r="1.200" fill="#ddd" /></>),
  annoVis: (<><path d="M5.500 0h3.500l1 8 6 8-8-5-8 5 5-7z" fill="#2f96f3" /><circle cx="11.500" cy="3.500" r="2.700" fill="#1d4c7c" stroke="#2f96f3" strokeWidth="1.300" /></>),
  annoAuto: (<><path d="M6 0h3l1 8 6 8-8-5-8 5 5-7z" fill="#ccc" /><path d="M14 0l-5 5h3l-3 4 6-5h-2z" fill="#e5e5e5" stroke="#484848" strokeWidth=".7" /></>),
  anno: <path d="M6.500 0h3l1 9 5.500 7-8-5-8 5 5.500-7z" fill="#ccc" />,
  plus: <path d="M8 1v14M1 8h14" stroke="#cfcfcf" strokeWidth="1.500" />,
  ruler: (<><path d="M6 1h5v14H6z" fill="#aaa" /><path d="M8 3h3M8 6h3M8 9h3M8 12h3" stroke="#555" /></>),
  quickProps: (<><path d="M4.500 3.500h7v9h-7z" fill="none" stroke="#bbb" strokeWidth="1.100" /><path d="M6 6h1.500M8.500 6H10M6 8.500h1.500M8.500 8.500H10M6 10.500h1.500M8.500 10.500H10" stroke="#bbb" /></>),
  uiLock: (<><path d="M.5 12V1.500H14V6M1 4h13M.5 12H8" fill="none" stroke="#2f96f3" strokeWidth="1.500" /><path d="M10 10h6v5h-6zM11 10V8a2 2 0 014 0v2" fill="#2f96f3" stroke="#2f96f3" /></>),
  isolate: (<><path d="M1 1h6v6H1zM7 9l4 6H4z" fill="none" stroke="#bbb" strokeWidth="1.200" /><circle cx="12" cy="7" r="3" fill="none" stroke="#bbb" strokeWidth="1.200" /></>),
  perf: (<><circle cx="8" cy="8" r="7.500" fill="#11508a" stroke="#2586e0" strokeWidth="1.300" /><path d="M7 9l5-3" stroke="#2f9dff" strokeWidth="1.500" /></>),
  clean: <path d="M.5 2.500h15v11H.5zM9 5h4v4M13 5L9.500 8M3 8v3h4M3 11l3-2.500" fill="none" stroke="#ccc" strokeWidth="1.200" />,
  menu: <path d="M0 3h16M0 8h16M0 13h16" stroke="#ccc" strokeWidth="1.600" />,
  gridOn: (
    <>
      <path d="M1 1h15v15H1z" fill="#173f70" />
      <path d="M3 0v16M6.500 0v16M10 0v16M13.500 0v16M0 3h16M0 6.500h16M0 10h16M0 13.500h16" stroke="#2f8ff0" strokeWidth="1.200" />
    </>
  ),
  snapDots: <path d="M1 1.500h15M1 4.500h15M1 7.500h15M1 10.500h15M1 13.500h15" stroke="#c9c9c9" strokeDasharray="1 2" />,
  note: (<><path d="M8.500 13V1.500h4v5h-4" fill="none" stroke="#bbb" strokeWidth="1.300" /><path d="M4 11h5v4H4z" fill="#bbb" /></>),
  graph: (<><path d="M-.5 1.500h17v13h-17z" fill="#eee" stroke="#111" /><path d="M1 12c4 0 4-8 7-8s2 7 7 7" fill="none" stroke="#333" strokeWidth="1.300" /><path d="M13 8l4 8H9z" fill="#d0662a" /></>),
};

function Icon({ name, className = 'size-4' }: { name: string; className?: string }) {
  return (
    <svg viewBox="0 0 16 16" className={`shrink-0 overflow-visible ${className}`} fill="none" aria-hidden="true">
      {iconMap[name]}
    </svg>
  );
}

function Tool({ name, className = 'h-[22px] w-[23px]', icon }: { name: string; className?: string; icon?: string }) {
  return (
    <button type="button" aria-label={name} className={`flex shrink-0 items-center justify-center ${className}`}>
      <Icon name={name} className={icon} />
    </button>
  );
}

function Caret({ className = 'w-4', fill = '#fff' }: { className?: string; fill?: string }) {
  return (
    <button type="button" aria-label="More" className={`flex shrink-0 items-center justify-center ${className}`}>
      <svg width="7" height="4" viewBox="0 0 7 4" aria-hidden="true">
        <path d="M0 0h7L3.500 4z" fill={fill} />
      </svg>
    </button>
  );
}

function Sep() {
  return (
    <div className="flex w-1.5 shrink-0 justify-center">
      <div className="my-0.5 w-0.5 border-l border-[#2f2f2f] bg-[#808080]" />
    </div>
  );
}

function Bar({ children, className = '' }: { children: ReactNode; className?: string }) {
  return (
    <div className={`flex h-6 shrink-0 border border-[#373737] bg-[#5e5e5e] pl-[7px] ${className}`}>{children}</div>
  );
}

function Combo({
  label,
  value,
  before,
  className = '',
  text = 'pl-2 text-[12px]',
}: {
  label: string;
  value: string;
  before?: ReactNode;
  className?: string;
  text?: string;
}) {
  return (
    <div className={`relative flex shrink-0 items-center border-y border-[#9b9b9b] bg-[#e1e1e1] ${className}`}>
      {before}
      <select aria-label={label} className={`h-full min-w-0 flex-1 appearance-none bg-transparent text-black outline-none ${text}`}>
        <option>{value}</option>
      </select>
      <svg className="pointer-events-none absolute right-1 top-2 h-1.5 w-2" viewBox="0 0 8 6" fill="none">
        <path d="M.5 1L4 4.500 7.500 1" stroke="#555" strokeWidth="1.200" />
      </svg>
    </div>
  );
}

/* ---------- header ---------- */

const menus = [
  ['文件', 'F'], ['编辑', 'E'], ['视图', 'V'], ['插入', 'I'], ['格式', 'O'], ['工具', 'T'],
  ['绘图', 'D'], ['标注', 'N'], ['修改', 'M'], ['参数', 'P'], ['窗口', 'W'], ['帮助', 'H'],
];

function Header() {
  return (
    <header className="flex shrink-0 bg-white">
      <div className="flex w-[41px] shrink-0 flex-col pt-[7px]">
        <button type="button" aria-label="Application menu" className="flex h-[41px] items-start border border-black bg-gradient-to-b from-[#b4b4b4] to-[#6b6b6b] pt-0.5">
          <svg viewBox="0 0 26 28" className="ml-1 h-7 w-[25px]" aria-hidden="true">
            <path d="M9 1h7l9 25h-7l-2-5-8-1-3 6H0z" fill="#c3272d" />
            <path d="M9 1l3 10-7 9-5 6z" fill="#e25257" />
            <path d="M12 8l3 8-5-.500z" fill="#999" />
            <path d="M3 20c5-4 10-5 14-3l2 5c-6-3-11-3-16 2z" fill="#8e1519" />
            <path d="M15 1l1 0 9 25h-4z" fill="#9d1a1f" />
          </svg>
          <svg width="7" height="4" className="mt-4 ml-px" viewBox="0 0 7 4" aria-hidden="true">
            <path d="M0 0h7L3.500 4z" fill="#333" />
          </svg>
        </button>
        <div className="flex-1 bg-[#505050]" />
      </div>

      <div className="min-w-0 flex-1">
        <div className="flex h-[31px]">
          <div className="mt-[7px] flex shrink-0 border border-[#5a5a5a] bg-gradient-to-b from-[#a5a5a5] to-[#6c6c6c] pl-1">
            {['new', 'open', 'save', 'saveAs', 'print', 'undo'].map((n) => (
              <Tool key={n} name={n} className="w-6" icon="size-[15px]" />
            ))}
            <Caret className="w-2.5" />
            <button type="button" aria-label="Customize" className="flex w-[22px] items-center justify-center">
              <svg width="8" height="6" viewBox="0 0 8 6" aria-hidden="true">
                <path d="M0 0l4 3-4 3zM4 0l4 3-4 3z" fill="#000" />
              </svg>
            </button>
          </div>
          <h1 className="min-w-0 flex-1 truncate pr-3 text-right text-[12px] leading-[30px] text-black">Drawing1.dwg</h1>
          <div className="mt-[7px] flex shrink-0 items-stretch border border-[#777] bg-gradient-to-b from-[#a5a5a5] to-[#6c6c6c]">
            <button type="button" aria-label="Collapse search" className="flex w-[13px] items-center justify-center">
              <svg width="5" height="8" viewBox="0 0 5 8" aria-hidden="true"><path d="M0 0l4.500 4L0 8z" fill="#fff" /></svg>
            </button>
            <input
              type="text"
              aria-label="键入关键字或短语"
              placeholder="键入关键字或短语"
              className="my-px w-[180px] border border-[#3c3c3c] bg-[#727272] pl-[3px] text-[12px] italic text-white outline-none placeholder:text-[#c6c6c6]"
            />
            <Tool name="binoc" className="w-6" icon="size-[15px]" />
            <Tool name="user" className="w-6" icon="size-[15px]" />
            <button type="button" className="w-[26px] pl-0.5 text-left text-[12px] text-white">登录</button>
            <div className="w-[55px]" />
            <Caret className="w-3" />
            <Tool name="exchange" className="w-8" />
            <Tool name="a360" className="w-4" icon="size-[15px]" />
            <Caret className="w-4" />
            <div className="my-1 ml-1 border-l border-[#8f8f8f]" />
            <Tool name="help" className="ml-1.5 w-[22px]" />
            <Caret className="w-[14px]" />
          </div>
          <div className="flex w-[162px] shrink-0 items-center justify-around pb-0.5 pl-7">
            {['M1 6h10', 'M1 1h10v10H1z', 'M1 1l10 10M11 1L1 11'].map((d, i) => (
              <button key={d} type="button" aria-label={['Minimize', 'Maximize', 'Close'][i]}>
                <svg width="12" height="12" viewBox="0 0 12 12" fill="none" aria-hidden="true"><path d={d} stroke="#000" /></svg>
              </button>
            ))}
          </div>
        </div>
        <nav className="flex h-[21px] items-center border-t border-[#3a3a3a] bg-gradient-to-b from-[#979797] to-[#505050] pl-[14px] text-[12px] leading-5 text-white">
          <div className="flex min-w-0 flex-1 gap-[25px]">
            {menus.map(([label, key]) => (
              <button key={key} type="button" className="shrink-0">
                {label}(<u className="underline-offset-2">{key}</u>)
              </button>
            ))}
          </div>
          <div className="flex shrink-0 items-center gap-1.5 pr-1">
            <button type="button" aria-label="Minimize drawing"><svg width="10" height="10" viewBox="0 0 10 10"><path d="M0 8h10" stroke="#222" strokeWidth="2" /></svg></button>
            <button type="button" aria-label="Restore drawing"><svg width="12" height="10" viewBox="0 0 12 10" fill="none"><path d="M4 3V1h7v5H8M1 4h7v5H1z" stroke="#222" strokeWidth="1.500" /></svg></button>
            <button type="button" aria-label="Close drawing"><svg width="9" height="10" viewBox="0 0 9 10"><path d="M1 1l7 8M8 1L1 9" stroke="#222" strokeWidth="2.500" /></svg></button>
          </div>
        </nav>
      </div>
    </header>
  );
}

function DocTabs() {
  return (
    <div className="flex h-[25px] shrink-0 items-end bg-[#373737] pl-3">
      <div className="relative flex h-[22px] w-[140px] items-center">
        <svg className="absolute inset-0 size-full" viewBox="0 0 142 22" preserveAspectRatio="none" aria-hidden="true">
          <defs>
            <linearGradient id="tab" x1="0" y1="0" x2="0" y2="1">
              <stop offset="0" stopColor="#848484" />
              <stop offset="1" stopColor="#5c5c5c" />
            </linearGradient>
          </defs>
          <path d="M0 22c9-1 8-10 11-17 1-3 3-5 6-5h110c4 0 6 3 8 9 2 7 2 12 7 13z" fill="url(#tab)" />
        </svg>
        <button type="button" className="relative ml-5 text-[12px] text-white">Drawing1*</button>
        <button type="button" aria-label="Close tab" className="relative ml-auto mr-5">
          <svg width="8" height="8" viewBox="0 0 8 8"><path d="M1 1l6 6M7 1L1 7" stroke="#333" strokeWidth="1.500" /></svg>
        </button>
      </div>
      <button type="button" aria-label="New tab" className="mb-[3px] flex h-[14px] w-[22px] items-center justify-center rounded-tl-lg rounded-tr-md rounded-br-lg rounded-bl-sm bg-[#555]">
        <svg width="8" height="8" viewBox="0 0 8 8"><path d="M4 0v8M0 4h8" stroke="#d5d5d5" strokeWidth="2" /></svg>
      </button>
    </div>
  );
}

/* ---------- toolbars ---------- */

const standardGroups = [
  ['new', 'open', 'save'],
  ['print', 'preview', 'publish', 'globe'],
  ['cut', 'copy', 'paste', 'match', 'blockEdit'],
];

function Toolbars() {
  return (
    <div className="flex shrink-0 flex-col gap-[3px] overflow-hidden bg-[#5c5c5c] pt-1">
      <div className="flex gap-px">
        <Bar>
          {standardGroups.map((group) => (
            <div key={group[0]} className="flex">
              {group.map((n) => <Tool key={n} name={n} />)}
              <Sep />
            </div>
          ))}
          <Tool name="undo" />
          <Caret className="w-[13px]" fill="#333" />
          <Tool name="redo" />
          <Caret className="w-[13px]" fill="#8a8a8a" />
          <Sep />
          {['hand', 'zoomRt', 'zoomWin', 'zoomPrev'].map((n) => <Tool key={n} name={n} />)}
          <Sep />
          {['props', 'designCenter', 'palettes', 'sheetSet', 'markup', 'calc'].map((n) => <Tool key={n} name={n} />)}
          <Sep />
          <Tool name="helpBox" className="w-[22px]" />
        </Bar>
        <Bar className="flex-1">
          <Tool name="textStyle" />
          <Combo label="Text style" value="XD-DimFont" className="w-[120px]" text="pl-[19px] text-[12px]" />
          <Sep />
          <Tool name="dimStyle" />
          <Combo label="Dimension style" value="XD-DS-M-100" className="w-[120px]" text="pl-[19px] text-[12px]" />
          <Sep />
        </Bar>
      </div>
      <div className="flex gap-0.5">
        <Bar>
          <Combo label="Workspace" value="AutoCAD 经典" className="w-[175px]" text="pl-[9px] text-[12px]" />
          <Tool name="gear" className="w-[22px]" />
          <Tool name="wsHouse" />
        </Bar>
        <Bar>
          <Tool name="layerProps" />
          <Combo
            label="Layer"
            value="0"
            className="w-[300px]"
            text="pl-1 text-[12px]"
            before={
              <div className="flex gap-px pl-[3px]">
                {['bulb', 'sun', 'vpFreeze', 'unlock', 'swatch'].map((n) => (
                  <Icon key={n} name={n} className="size-[15px]" />
                ))}
              </div>
            }
          />
          {['layerCur', 'layerPrev', 'layerState'].map((n) => <Tool key={n} name={n} />)}
        </Bar>
        <Bar className="min-w-0 flex-1">
          <Combo
            label="Color"
            value="ByLayer"
            className="w-[150px]"
            text="text-[12px] font-['Liberation_Serif',serif]"
            before={<Icon name="swatch" className="ml-0.5 size-[17px]" />}
          />
          <Sep />
          <Combo
            label="Linetype"
            value="ByLayer"
            className="w-[160px]"
            text="pl-1 text-[12px] font-['Liberation_Serif',serif]"
            before={<div className="ml-1 w-[60px] border-t border-black" />}
          />
        </Bar>
      </div>
    </div>
  );
}

function SideBar({ names, className = '' }: { names: string[]; className?: string }) {
  return (
    <div className={`flex w-[25px] shrink-0 flex-col border border-[#373737] bg-[#626262] pt-2 ${className}`}>
      {names.map((n, i) => (
        <Tool key={`${n}${i}`} name={n} className="h-[22px] w-[22px]" />
      ))}
    </div>
  );
}

const drawTools = [
  'line', 'xline', 'pline', 'polygon', 'rect', 'arc', 'circle', 'cloud', 'spline', 'ellipse', 'ellipseArc',
  'insert', 'block', 'point', 'hatch', 'gradient', 'region', 'table', 'mtext', 'addSel',
];
const modifyTools = [
  'erase', 'copyObj', 'mirror', 'offset', 'array', 'move', 'rotate', 'scale', 'stretch', 'trim', 'extend',
  'breakPt', 'breakObj', 'join', 'chamfer', 'fillet', 'blend', 'explode',
];
const xdTools = [
  'xdPanel', 'xdPanelIn', 'xdSqueeze', 'xdGrid', 'xdWindow', 'xdScene', 'xdFilter', 'xdSelect', 'xdShapes', 'xdCurve',
  'xdHatch', 'xdRainbow', 'xdDim', 'xdText', 'xdNotes', 'xdTools', 'xdBox', 'xdSelect', 'xdLayers',
];
const panTools = ['panUp', 'panDown', 'panRight', 'panLeft', 'pageUp', 'pageDown', 'pageRight', 'pageLeft', 'zoomDot'];
const viewTools = ['lock', 'folder', 'zoomRed', 'flag', 'flagBox', 'pBox', 'p1', 'p2', 'p3', 'p4'];
const layerTools = [
  'layPencil', 'feet', 'layColors', 'layYellow', 'layYellow', 'blueBulb', 'flatYellow', 'flatGray', 'layLock', 'layBack',
  'layPick', 'layPick2', 'layMerge', 'layDel', 'layX',
];

const xdMenu = [
  '设　置...', '预处理...', '景　观...', '实　体...', '曲　线...', '表　格...', '图　层...', '标　注...', '坐　标...',
  '竖　向...', '符　号...', '文字一...', '文字二...', '', '排　版...', '统　计...', '批处理...', '', '工具一...', '工具二...',
];

/* ---------- drawing area ---------- */

const step = 47.6 / 5;
const gridLines = Array.from({ length: 260 }, (_, i) => i - 4);

function Grid() {
  return (
    <svg className="absolute inset-0 size-full" shapeRendering="crispEdges" aria-hidden="true">
      {[false, true].map((major) =>
        gridLines
          .filter((i) => (i % 5 === 0) === major)
          .map((i) => {
            const x = Math.round(38 + i * step);
            const y = Math.round(42 + i * step);
            const color = major ? '#2d2d36' : '#1f2022';
            return (
              <g key={i} fill={color}>
                <rect x={x} y="0" width="1" height="100%" />
                <rect x="0" y={y} width="100%" height="1" />
              </g>
            );
          }),
      )}
    </svg>
  );
}

function ViewCube() {
  return (
    <div className="absolute right-[7px] top-2 flex flex-col items-center">
      <svg width="88" height="88" viewBox="0 0 88 88" fontSize="12" textAnchor="middle" fill="#a9a9a9" aria-label="ViewCube">
        <circle cx="44" cy="42" r="32" fill="none" stroke="#474747" strokeWidth="8" />
        <rect x="28.500" y="26.500" width="31" height="31" fill="#a3a3a6" stroke="#bdbdbd" />
        <rect x="34" y="32" width="20" height="20" fill="#b0b0b8" />
        <text x="44" y="47" fontSize="15" fill="#4a4a4a">上</text>
        <text x="44" y="13">北</text>
        <text x="44" y="81">南</text>
        <text x="10" y="47">西</text>
        <text x="78" y="47">东</text>
      </svg>
      <button type="button" className="mt-1.5 flex h-[17px] w-12 items-center gap-1.5 rounded bg-[#8d8d94] pl-1 font-['Liberation_Sans',sans-serif] text-[11px] text-[#d5d5d9] ring-1 ring-[#7b7b82] ring-inset">
        WCS
        <svg width="8" height="5" viewBox="0 0 8 5" fill="none"><path d="M.5.5h7L4 4.500z" stroke="#a8a8ae" /></svg>
      </button>
    </div>
  );
}

function Workspace() {
  return (
    <main className="relative flex min-h-0 flex-1 bg-[#5c5c5c] pt-1">
      <SideBar names={drawTools} className="self-start" />

      <div className="ml-1 flex min-w-0 flex-1 flex-col overflow-hidden pb-[5px]">
        <section className="relative min-h-0 flex-1 overflow-hidden bg-[#151515]">
          <Grid />
          <p className="relative pl-[3px] pt-1 text-[12px] leading-[18px] text-white">[−][俯视][二维线框]</p>
          <ViewCube />
        </section>
        <div className="mt-1 flex">
          <Bar>{panTools.map((n) => <Tool key={n} name={n} />)}</Bar>
        </div>
        <div className="mt-[3px] flex gap-px">
          <Bar className="w-[239px]">{viewTools.map((n) => <Tool key={n} name={n} />)}</Bar>
          <Bar>{layerTools.map((n, i) => <Tool key={i} name={n} />)}</Bar>
          <Bar>{layerTools.slice(0, 5).map((n, i) => <Tool key={i} name={n} />)}</Bar>
          <Bar className="border-x-0">{['bolt', 'house', 'cube'].map((n) => <Tool key={n} name={n} />)}</Bar>
        </div>
      </div>

      <div className="ml-1 flex shrink-0 flex-col overflow-hidden">
        <SideBar names={modifyTools} />
        <SideBar names={['order1', 'order2', 'order3']} className="flex-1 border-b-0" />
      </div>
      <SideBar names={xdTools} className="ml-[3px] self-start" />

      <aside className="ml-[3px] w-[71px] shrink-0 overflow-hidden bg-[#616161] pl-[3px] pt-3 text-[12px] leading-[19px] text-[#0d0d0d]">
        <p>晓东工具</p>
        <p>V19.0208</p>
        <div className="my-[9px] border-t border-black" />
        <ul>
          {xdMenu.map((item, i) => (
            <li key={i} className="h-[19px]">
              {item && <button type="button">{item}</button>}
            </li>
          ))}
        </ul>
      </aside>

      {/* highlighted XD area */}
      <div className="pointer-events-none absolute -top-1 right-0.5 bottom-[9px] z-10 w-[140px] rounded border-[3px] border-[#e2301f]" />
    </main>
  );
}

/* ---------- command line and status ---------- */

function CommandLine() {
  return (
    <div className="flex shrink-0 border-y border-[#7b7b7b] bg-white">
      <div className="flex h-14 w-[23px] shrink-0 flex-col items-center bg-gradient-to-b from-[#777] to-[#3a3a3a] pt-1">
        <svg width="17" height="5" viewBox="0 0 17 5" aria-hidden="true">
          <path d="M0 .5h17M0 2.500h17M0 4.500h17" stroke="#b5b5b5" strokeDasharray="1 1" />
        </svg>
        <button type="button" aria-label="Close command line" className="mt-[7px]">
          <svg width="10" height="10" viewBox="0 0 10 10"><path d="M1 1l8 8M9 1L1 9" stroke="#fff" strokeWidth="2" /></svg>
        </button>
        <button type="button" aria-label="Customize" className="mt-2.5">
          <svg width="15" height="15" viewBox="0 0 15 15" fill="none">
            <path d="M6 6l7 7" stroke="#f0f0f0" strokeWidth="3" strokeLinecap="round" />
            <path d="M6 1.500A3 3 0 111.500 6" stroke="#f0f0f0" strokeWidth="2.500" />
          </svg>
        </button>
      </div>
      <div className="min-w-0 flex-1">
        <p className="flex h-[34px] items-end border-b border-[#7b7b7b] pl-0.5 pb-0.5 text-[13px] leading-[18px] text-black">命令:</p>
        <div className="flex h-[22px] items-center">
          <button type="button" aria-label="Recent commands" className="ml-[5px] flex h-[15px] w-[15px] items-center justify-center border border-[#7d8a9b] bg-[#d5dce5]">
            <svg width="11" height="9" viewBox="0 0 11 9" fill="none"><path d="M1 1l4 3-4 3M6 8h4" stroke="#333" /></svg>
          </button>
          <Caret className="w-3" fill="#8b8b8b" />
          <input type="text" aria-label="键入命令" placeholder="键入命令" className="h-full min-w-0 flex-1 pl-1 text-[13px] italic text-black outline-none placeholder:text-[#8f8f8f]" />
        </div>
      </div>
    </div>
  );
}

function LayoutTab({ label, active = false }: { label: string; active?: boolean }) {
  return (
    <button type="button" className={`relative h-[18px] w-[54px] text-[12px] leading-[18px] ${active ? 'z-10 font-bold text-white' : 'text-[#b5b5b5]'}`}>
      <svg className="absolute inset-0 size-full" viewBox="0 0 54 18" preserveAspectRatio="none" aria-hidden="true">
        <path d="M0 0h54c-4 2-4 7-6 12-1 4-3 5-6 5H12c-3 0-5-2-6-5C4 7 4 2 0 0z" fill={active ? '#8a8a8a' : '#5a5a5a'} />
      </svg>
      <span className="relative">{label}</span>
    </button>
  );
}

function Cell({ children, className = '' }: { children: ReactNode; className?: string }) {
  return <div className={`flex shrink-0 items-center border border-[#808080] bg-[#4b4b4b] ${className}`}>{children}</div>;
}

function LayoutRow() {
  return (
    <div className="flex h-7 shrink-0 bg-[#373737]">
      <div className="flex min-w-0 flex-1 pl-2">
        <LayoutTab label="模型" active />
        <div className="-ml-1 flex">
          <LayoutTab label="布局1" />
          <LayoutTab label="布局2" />
        </div>
        <button type="button" aria-label="New layout" className="ml-1 flex h-[17px] w-[22px] items-center justify-center rounded-tl-sm rounded-tr-sm rounded-br-lg rounded-bl-lg bg-[#505050]">
          <svg width="8" height="8" viewBox="0 0 8 8"><path d="M4 0v8M0 4h8" stroke="#d5d5d5" strokeWidth="2" /></svg>
        </button>
      </div>
      <div className="flex shrink-0 gap-px py-px text-[12px] text-white">
        <Cell className="w-[142px] justify-end pr-1.5">...</Cell>
        <Cell className="w-[30px] justify-center"><button type="button">模型</button></Cell>
        <Cell className="w-16">
          <Tool name="gridOn" className="w-[22px]" icon="size-[15px]" />
          <Tool name="snapDots" className="w-6" icon="size-4" />
          <Caret className="w-4" />
        </Cell>
        <Cell className="w-[26px] justify-center"><Tool name="note" className="w-6" /></Cell>
      </div>
    </div>
  );
}

function StatusBar() {
  return (
    <footer className="flex h-[27px] shrink-0 overflow-hidden bg-[#373737] pt-px pl-[23px] text-[12px] text-white">
      <Cell className="w-[26px] justify-center border-r-0"><Tool name="infer" className="w-6" /></Cell>
      <Cell className="w-[103px] border-r-0">
        <Tool name="ortho" className="w-6" />
        <Tool name="polar" className="w-6" />
        <Caret />
        <Tool name="iso" className="w-6" />
        <Caret className="w-3" />
      </Cell>
      <Cell className="w-16 border-r-0">
        <Tool name="otrack" className="w-6" />
        <Tool name="osnap" className="w-[23px]" />
        <Caret className="w-[15px]" />
      </Cell>
      <Cell className="w-[25px] justify-center border-r-0"><Tool name="lwt" className="w-6" /></Cell>
      <Cell className="w-[25px] justify-center border-r-0"><Tool name="transp" className="w-6" /></Cell>
      <Cell className="w-[25px] justify-center border-r-0"><Tool name="cycle" className="w-6" /></Cell>
      <Cell className="w-10">
        <Tool name="osnap3d" className="w-6" />
        <Caret className="w-[14px]" />
      </Cell>
      <Cell className="ml-px w-[105px]">
        <Tool name="ducs" className="w-6" />
        <Tool name="filter3d" className="w-6" />
        <Caret className="w-[14px]" />
        <Tool name="gizmo" className="w-6" />
        <Caret />
      </Cell>
      <Cell className="ml-px w-[147px]">
        <Tool name="annoVis" className="w-6" />
        <Tool name="annoAuto" className="w-6" />
        <Tool name="anno" className="w-6" />
        <select aria-label="Annotation scale" className="w-[62px] appearance-none bg-transparent pl-0.5 text-white outline-none">
          <option>1:1 / 100%</option>
        </select>
        <Caret className="w-[11px]" />
      </Cell>
      <Cell className="w-10 border-r-0">
        <Tool name="gear" className="w-6" icon="size-[13px] opacity-75" />
        <Caret className="w-[14px]" />
      </Cell>
      <Cell className="w-[27px] justify-center"><Tool name="plus" className="w-6" /></Cell>
      <Cell className="ml-px w-[98px] border-r-0">
        <Tool name="ruler" className="w-[22px]" />
        <select aria-label="Units" className="w-[57px] appearance-none bg-transparent pl-[5px] text-white outline-none">
          <option>小数</option>
        </select>
        <Caret />
      </Cell>
      <Cell className="w-[26px] justify-center"><Tool name="quickProps" className="w-6" /></Cell>
      <Cell className="w-10 border-r-0">
        <Tool name="uiLock" className="w-6" />
        <Caret className="w-[14px]" />
      </Cell>
      <Cell className="w-[26px] justify-center"><Tool name="isolate" className="w-6" /></Cell>
      <Cell className="ml-px w-[27px] justify-center"><Tool name="perf" className="w-6" icon="size-[17px]" /></Cell>
      <Cell className="ml-px w-8 justify-center"><Tool name="graph" className="w-7" icon="size-[17px]" /></Cell>
      <Cell className="ml-px min-w-0 flex-1">
        <Tool name="clean" className="w-6" />
        <Tool name="menu" className="w-[26px]" />
      </Cell>
    </footer>
  );
}

export default function App() {
  return (
    <div className={`flex h-screen bg-[#0b332c] pb-0.5 pl-0.5 ${sans}`}>
      <div className="flex min-w-0 flex-1 flex-col border-b-2 border-l border-white bg-[#373737]">
        <Header />
        <DocTabs />
        <Toolbars />
        <Workspace />
        <CommandLine />
        <LayoutRow />
        <StatusBar />
      </div>
    </div>
  );
}
